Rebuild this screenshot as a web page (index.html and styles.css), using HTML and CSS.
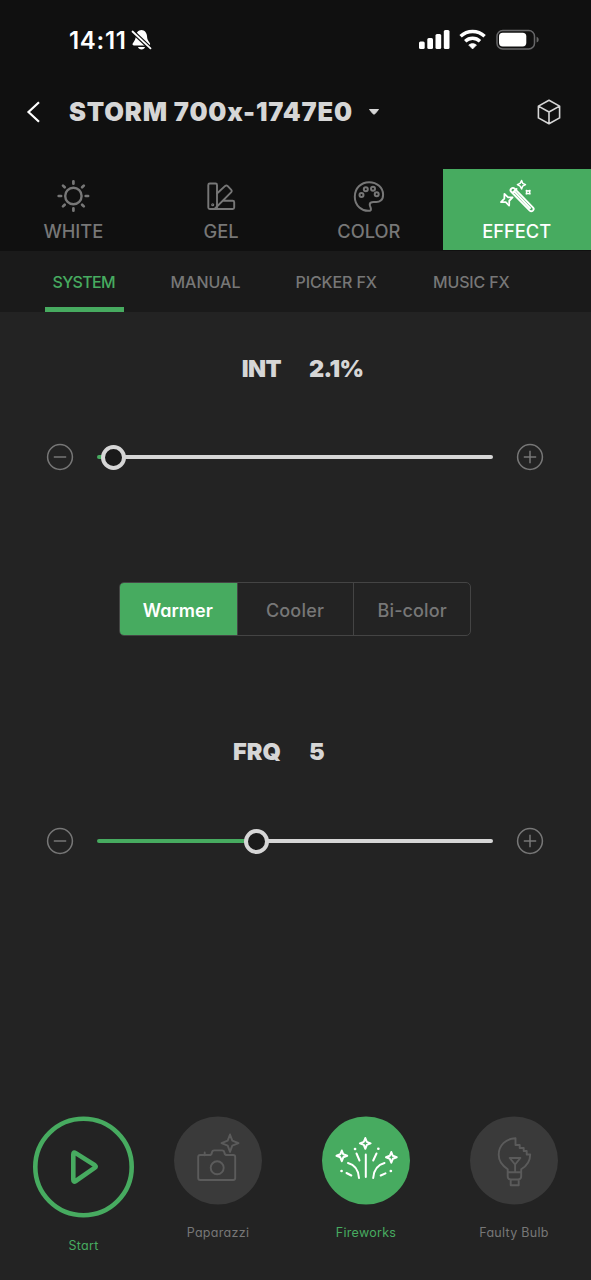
FILE: index.html
```html
<!DOCTYPE html>
<html lang="en">
<head>
<meta charset="utf-8">
<title>STORM 700x</title>
<link rel="stylesheet" href="styles.css">
</head>
<body>
<div class="screen">
  <div class="status">
    <span class="time">14:11</span>
    <svg class="bell" width="22" height="24" viewBox="0 0 22 24">
      <path d="M10.5 2C13.5 2 15.800 4.800 16 8c.2 4 1.500 5 3 7.500.4 1-.1 1.900-1 1.900H3c-1.200 0-1.900-.9-1.300-1.900C3.700 12.500 4.700 11 4.900 8 5.100 4.800 7.400 2 10.500 2z" fill="#fff"/>
      <path d="M7 19h7c-.5 3.300-6.500 3.300-7 0z" fill="#fff"/>
      <path d="M.5 2.500l19.500 18.500" stroke="#101010" stroke-width="4.200"/>
      <path d="M1.500 3.500l18 16.800" stroke="#fff" stroke-width="1.800" stroke-linecap="round"/>
    </svg>
    <svg class="signals" width="122" height="24" viewBox="418 28 122 24">
      <g fill="#fff">
        <rect x="419" y="41.500" width="5.700" height="7.500" rx="1.500"/>
        <rect x="427.300" y="38" width="5.700" height="11" rx="1.500"/>
        <rect x="435.500" y="34" width="5.700" height="15" rx="1.500"/>
        <rect x="443.800" y="30" width="5.700" height="19" rx="1.500"/>
        <path d="M472.600 49l-3.900-3.900c2.300-2 5.500-2 7.800 0z" stroke="#fff" stroke-linejoin="round" stroke-width=".6"/>
        <rect x="499" y="32.700" width="27.300" height="13.800" rx="3.700"/>
        <path d="M536.600 36.700c2.800.8 2.800 5 0 5.800z" fill="#666"/>
      </g>
      <path d="M460.600 36.300c6.800-6.500 17.200-6.500 24 0M465.200 41.200c4.200-4 10.600-4 14.800 0" fill="none" stroke="#fff" stroke-width="3.400"/>
      <rect x="497" y="30.500" width="37.500" height="18.500" rx="5.700" fill="none" stroke="#68686a" stroke-width="1.500"/>
    </svg>
  </div>

  <header class="header">
    <svg class="back" width="16" height="24" viewBox="0 0 16 24"><path d="M13 2.200L2.500 12 13 21.800" fill="none" stroke="#fff" stroke-width="2.200"/></svg>
    <h1 class="title">STORM 700x-1747E0</h1>
    <svg class="caret" width="12" height="8" viewBox="0 0 12 8"><path d="M1.500 1.500h9L7 5.700q-1 .8-2 0z" fill="#d6d6d6" stroke="#d6d6d6" stroke-linejoin="round"/></svg>
    <svg class="cube" width="24" height="26" viewBox="0 0 24 26"><path d="M12 1.200l10.600 5.900v11.800L12 24.800 1.400 18.900V7.100zM1.400 7.100L12 13l10.600-5.900M12 13v11.800" fill="none" stroke="#d6d6d6" stroke-width="1.600" stroke-linejoin="round"/></svg>
  </header>

  <nav class="tabs">
    <div class="tab">
      <svg class="tab-icon" viewBox="-0.400 0 36 36">
        <circle cx="18" cy="18" r="8.200" stroke-width="2.400"/>
        <path d="M18 3.300v2.400M18 30.300v2.400M3.300 18h2.400M30.300 18h2.400M7.600 7.600l1.700 1.700M26.700 26.700l1.700 1.700M7.600 28.400l1.700-1.700M26.700 9.300l1.700-1.700" stroke-width="2.700"/>
      </svg>
      <span>WHITE</span>
    </div>
    <div class="tab">
      <svg class="tab-icon" viewBox="203 178 36 36" stroke-width="1.900">
        <rect x="208.300" y="183.500" width="8.700" height="25.500" rx="1.500"/>
        <path d="M217 193.500l8.200-7.600q1.200-1 2.300 0l3.800 4q1 1.200 0 2.300L214.500 209M223.500 200.800h9.200q1.500 0 1.500 1.500v5.200q0 1.500-1.500 1.500h-20.500"/>
        <circle cx="212.700" cy="204.700" r=".6"/>
      </svg>
      <span>GEL</span>
    </div>
    <div class="tab">
      <svg class="tab-icon" viewBox="351 178 36 36" stroke-width="2">
        <path d="M370 210.700c-8 1-15.200-5-15.200-14 0-8.400 6.200-14.500 14.300-14.500 8 0 14 5.500 14 12.500 0 5.500-3.500 7.800-8 7.300-3.600-.5-6.300.6-5 4.100.8 2 1.500 4.200-.1 4.600z"/>
        <circle cx="361.500" cy="195" r="2"/><circle cx="365.800" cy="189.300" r="2"/><circle cx="373" cy="188.800" r="2"/><circle cx="376.700" cy="194.300" r="2"/>
      </svg>
      <span>COLOR</span>
    </div>
    <div class="tab tab-active">
      <svg class="tab-icon" viewBox="499 178 36 36" stroke-width="1.900">
        <path d="M511 191.500q-1.200-1.500.2-2.800 1.800-1.700 3.400 0l18.500 19q1.300 1.500-.2 2.900-1.700 1.500-3.200 0zM514.500 191.700l15.500 16.300M512.500 193l4-4"/>
        <path d="M0-6.300L1.900-1.900 6.300 0 1.900 1.900 0 6.300-1.900 1.900-6.300 0-1.900-1.900z" transform="translate(506.800 199.700) rotate(-22)" stroke-width="1.800"/>
        <path d="M521.600 180.500l1.100 2.800 2.800 1.400-2.800 1.400-1.100 2.800-1.500-2.800-2.700-1.400 2.700-1.400zM526.300 190.500q1.600.8 3.700 0-.8 1.700 0 3.400-2-.8-3.700 0 .7-1.700 0-3.400z" stroke-width="1.500"/>
      </svg>
      <span>EFFECT</span>
    </div>
  </nav>

  <nav class="subtabs">
    <span class="subtab subtab-active">SYSTEM</span>
    <span class="subtab sub-manual">MANUAL</span>
    <span class="subtab sub-picker">PICKER FX</span>
    <span class="subtab sub-music">MUSIC FX</span>
  </nav>

  <main class="content">
    <div class="reading"><span class="reading-name">INT</span><span class="reading-value">2.1%</span></div>
    <div class="slider">
      <svg class="step" viewBox="0 0 28 28"><circle cx="14" cy="14" r="12.400"/><path d="M7.800 14h12.400"/></svg>
      <div class="track"><div class="fill" style="width:5px"></div><div class="knob"></div><div class="rest"></div></div>
      <svg class="step" viewBox="0 0 28 28"><circle cx="14" cy="14" r="12.400"/><path d="M7.800 14h12.400M14 7.800v12.400"/></svg>
    </div>

    <div class="segments">
      <div class="segment segment-active">Warmer</div>
      <div class="segment seg-cooler">Cooler</div>
      <div class="segment seg-bi">Bi-color</div>
    </div>

    <div class="reading reading-frq"><span class="reading-name">FRQ</span><span class="reading-value">5</span></div>
    <div class="slider">
      <svg class="step" viewBox="0 0 28 28"><circle cx="14" cy="14" r="12.400"/><path d="M7.800 14h12.400"/></svg>
      <div class="track"><div class="fill" style="width:148px"></div><div class="knob"></div><div class="rest"></div></div>
      <svg class="step" viewBox="0 0 28 28"><circle cx="14" cy="14" r="12.400"/><path d="M7.800 14h12.400M14 7.800v12.400"/></svg>
    </div>
  </main>

  <footer class="effects">
    <div class="effect effect-start">
      <svg width="102" height="102" viewBox="0.500 0 102 102" fill="none" stroke="#47ab60" stroke-linejoin="round">
        <circle cx="51" cy="51" r="48.200" stroke-width="4.600"/>
        <path d="M40.800 38.300q0-2.800 2.400-1.200l19.200 12.200q1.700 1.200 0 2.400L43.200 65q-2.400 1.600-2.400-1.200z" stroke-width="4.600"/>
      </svg>
      <span>Start</span>
    </div>
    <div class="effect">
      <svg width="88" height="89" viewBox="174 1116 88 89" fill="none" stroke="#5b5b5b" stroke-width="1.900" stroke-linejoin="round" stroke-linecap="round">
        <circle cx="218" cy="1160.500" r="44" fill="#3a3a3a" stroke="none"/>
        <path d="M204.700 1152.500v2.800M229.500 1155h3.700q2 0 2 2v21q0 2-2 2h-33q-2 0-2-2v-21q0-2 2-2h9.300q2 0 2.300-2 .3-2.600 2.500-2.600h7.700q2.200 0 2.500 2.600.3 2 2.500 2h1.500"/>
        <circle cx="217.200" cy="1167.800" r="6.500"/>
        <path d="M230 1134.500l2.300 6.200 6.200 2.500-6.200 2.500-2.300 6.200-2.300-6.200-6.200-2.500 6.200-2.500z"/>
      </svg>
      <span>Paparazzi</span>
    </div>
    <div class="effect effect-active">
      <svg width="88" height="89" viewBox="322 1116 88 89" fill="none" stroke="#fff" stroke-width="2" stroke-linejoin="round" stroke-linecap="round">
        <circle cx="366" cy="1160.500" r="44" fill="#47ab60" stroke="none"/>
        <path d="M365.800 1154.500v22.500M348 1163c7.500 2 10.500 7.500 11 15M384.500 1163c-7.500 2-10.800 7.500-11.300 15M356.500 1153.500l3 7M376.500 1153.500l-3.300 7M346.500 1173l4.800 2.500M385.500 1173.300l-4.800 2.200"/>
        <path d="M355 1149h.1M378.300 1148.800h.1M341.500 1171h.1M390.800 1171h.1" stroke-width="2.600"/>
        <path d="M365.300 1138l1.500 3.900 3.800 1.500-3.800 1.500-1.500 3.900-1.500-3.900-3.900-1.500 3.900-1.500zM341.800 1150.500l1.500 3.800 3.900 1.500-3.900 1.500-1.500 3.900-1.500-3.900-3.800-1.500 3.800-1.500zM391.300 1152l1.500 3.800 3.900 1.500-3.900 1.500-1.500 3.900-1.500-3.900-3.800-1.500 3.800-1.500z"/>
      </svg>
      <span>Fireworks</span>
    </div>
    <div class="effect">
      <svg width="88" height="89" viewBox="469.800 1116 88 89" fill="none" stroke="#5b5b5b" stroke-width="1.900" stroke-linejoin="round">
        <circle cx="513.800" cy="1160.500" r="44" fill="#3a3a3a" stroke="none"/>
        <path d="M507.500 1172.300v-3c-5-3.300-9-8.300-9-14.500 0-9.500 7-16.300 16.800-16.500v6.700h4.200v3h4v3h3v3.500h3.500c0 7.500-3.500 11.500-9 14.800v3z"/>
        <path d="M509.500 1158h10.700l-5.300 6.500zM514.900 1164.500v7.700M507.500 1172.300v4q0 3.200 3.200 3.200h7q3.300 0 3.300-3.200v-4M510.500 1180v5.300h8v-5.300"/>
      </svg>
      <span>Faulty Bulb</span>
    </div>
  </footer>
</div>
</body>
</html>
```
FILE: styles.css
```css
* { box-sizing: border-box; }
body {
  margin: 0;
  background: #232323;
  font-family: Inter, "Liberation Sans", sans-serif;
  font-feature-settings: "cv11";
  color: #d6d6d6;
}
svg { display: block; flex: none; }
.screen { width: 591px; height: 1280px; display: flex; flex-direction: column; white-space: nowrap; }

.status { height: 80px; background: #101010; display: flex; align-items: center; padding: 0 51px 0 69px; }
.time { width: 62px; color: #fff; font-size: 24px; font-weight: 600; letter-spacing: 0.7px; }
.signals { margin-left: auto; }

.header { height: 89px; background: #101010; display: flex; align-items: center; padding: 0 30px 25px 26px; }
.title { width: 299px; margin: 0 0 0 27px; font-size: 25.500px; line-height: 32px; font-weight: 900; letter-spacing: 0.820px; }
.cube { margin-left: auto; }

.tabs { height: 82px; background: #101010; display: grid; grid-template-columns: repeat(4, 1fr); }
.tab { height: 81px; display: flex; flex-direction: column; align-items: center; padding: 9px 1px 0 0; color: #777; font-size: 18.300px; line-height: 24px; font-weight: 500; }
.tab-icon { width: 36px; height: 36px; margin-bottom: 5px; fill: none; stroke: currentColor; stroke-linecap: round; stroke-linejoin: round; }
.tab-active { background: #47ab60; color: #fff; }

.subtabs { height: 61px; background: #1a1a1a; display: flex; padding-left: 44.500px; color: #777; font-size: 16px; font-weight: 500; line-height: 62px; }
.subtab-active { width: 79px; height: 61px; padding-left: 8px; border-bottom: 5px solid #47ab60; color: #47ab60; letter-spacing: -0.700px; }
.sub-manual { margin-left: 47px; width: 125px; }
.sub-picker { width: 137.500px; letter-spacing: -0.100px; }
.sub-music { letter-spacing: -0.150px; }

.content { flex: 1; padding: 41px 47px 0; }
.reading { height: 32px; display: grid; grid-template-columns: 234px 1fr; column-gap: 28px; font-size: 23.500px; line-height: 32px; font-weight: 900; letter-spacing: -0.600px; }
.reading-name { text-align: right; }
.reading-frq { line-height: 30px; letter-spacing: 0; }
.slider { height: 28px; margin: 58px 0 0 -1px; display: flex; align-items: center; justify-content: space-between; }
.step { width: 28px; height: 28px; fill: none; stroke: #777; stroke-width: 1.500px; }
.track { width: 396px; display: flex; align-items: center; }
.fill { height: 4px; background: #47ab60; border-radius: 2px 0 0 2px; }
.knob { width: 25px; height: 25px; margin: 0 -1px; border: 4px solid #d6d6d6; border-radius: 50%; background: #1a1a1a; }
.rest { flex: 1; height: 4px; background: #d6d6d6; border-radius: 0 2px 2px 0; }

.segments { width: 352px; height: 54px; margin: 111px auto 101px 72px; display: grid; grid-template-columns: repeat(3, 1fr); border: 1px solid #444; border-radius: 5px; overflow: hidden; font-size: 18px; font-weight: 500; line-height: 55px; text-align: center; color: #777; }
.segment + .segment { border-left: 1px solid #444; }
.segment.segment-active { background: #47ab60; color: #fff; font-weight: 600; padding-right: 1px; }
.seg-cooler { letter-spacing: 0.200px; padding-right: 1px; }
.seg-bi { letter-spacing: 0.100px; }

.effects { height: 164px; display: grid; grid-template-columns: 141.500px 148px 148px 88px; padding-left: 32.500px; font-size: 12.500px; letter-spacing: 0.300px; line-height: 18px; color: #777; }
.effect { width: 88px; display: flex; flex-direction: column; align-items: center; gap: 19px; }
.effect-start { width: 102px; color: #47ab60; }
.effect-active { color: #47ab60; }
```
